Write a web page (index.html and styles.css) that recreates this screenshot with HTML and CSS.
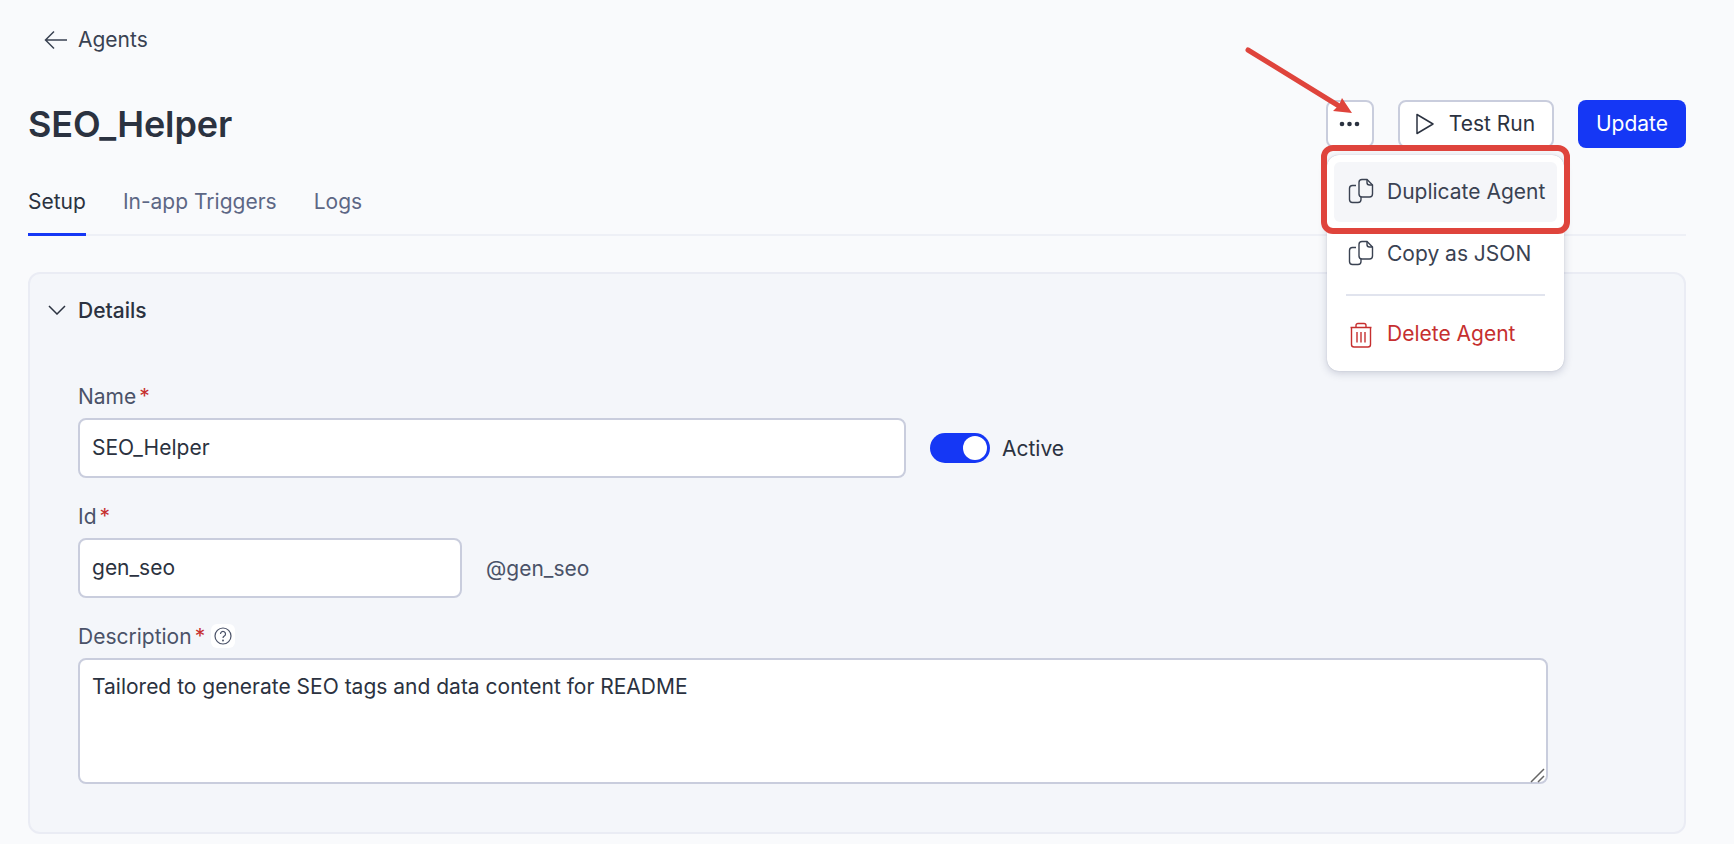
FILE: index.html
```html
<!DOCTYPE html>
<html lang="en">
<head>
<meta charset="utf-8">
<title>SEO_Helper</title>
<link rel="stylesheet" href="styles.css">
</head>
<body>
<div class="page">
  <a class="back">
    <svg class="back-icon" width="24" height="24" viewBox="0 0 24 24" fill="none" stroke="#3a4252" stroke-width="1.5"><path d="M23 12H2M10 3.500 1.500 12l8.500 8.500"/></svg>
    <span>Agents</span>
  </a>
  <header class="head">
    <h1 class="title">SEO_Helper</h1>
    <div class="actions">
      <button class="btn btn-icon" aria-label="More">
        <svg width="22" height="6" viewBox="0 0 22 6" fill="#2b3240"><circle cx="3" cy="3" r="2.300"/><circle cx="10.500" cy="3" r="2.300"/><circle cx="18" cy="3" r="2.300"/></svg>
      </button>
      <button class="btn btn-outline">
        <svg width="20" height="24" viewBox="0 0 20 24" fill="none" stroke="#2b3240" stroke-width="1.500" stroke-linejoin="round"><path d="M2 2.500v19L18 12z"/></svg>
        <span>Test Run</span>
      </button>
      <button class="btn btn-primary">Update</button>
      <div class="menu">
        <div class="menu-item is-hover">
          <svg class="menu-icon" width="26" height="26" viewBox="0 0 26 26" fill="none" stroke="#3a4252" stroke-width="1.400"><path d="M8 7.500H4.500a3 3 0 0 0-3 3v11a3 3 0 0 0 3 3H10a3 3 0 0 0 3-3v-2.500"/><path d="M14 1.500h5l5.500 5.500v9a3 3 0 0 1-3 3H14a3 3 0 0 1-3-3V4.500a3 3 0 0 1 3-3z"/><path d="M19 1.500v3a2.500 2.500 0 0 0 2.500 2.500h3"/></svg>
          <span>Duplicate Agent</span>
        </div>
        <div class="menu-item">
          <svg class="menu-icon" width="26" height="26" viewBox="0 0 26 26" fill="none" stroke="#3a4252" stroke-width="1.400"><path d="M8 7.500H4.500a3 3 0 0 0-3 3v11a3 3 0 0 0 3 3H10a3 3 0 0 0 3-3v-2.500"/><path d="M14 1.500h5l5.500 5.500v9a3 3 0 0 1-3 3H14a3 3 0 0 1-3-3V4.500a3 3 0 0 1 3-3z"/><path d="M19 1.500v3a2.500 2.500 0 0 0 2.500 2.500h3"/></svg>
          <span>Copy as JSON</span>
        </div>
        <hr class="menu-sep">
        <div class="menu-item is-danger">
          <svg class="menu-icon" width="26" height="26" viewBox="0 0 26 26" fill="none" stroke="#c62f2f" stroke-width="1.400"><path d="M2.500 5.500h21M8 5.500V3.500a2 2 0 0 1 2-2h6a2 2 0 0 1 2 2v2M3.500 5.500v17a2.500 2.500 0 0 0 2.500 2.500h14a2.500 2.500 0 0 0 2.500-2.500v-17M9 10v10.500M13 10v10.500M17 10v10.500"/></svg>
          <span>Delete Agent</span>
        </div>
      </div>
    </div>
  </header>
  <nav class="tabs">
    <a class="tab is-active">Setup</a>
    <a class="tab">In-app Triggers</a>
    <a class="tab">Logs</a>
  </nav>
  <section class="card">
    <div class="card-head">
      <svg width="18" height="10" viewBox="0 0 18 10" fill="none" stroke="#2b3240" stroke-width="1.500"><path d="M1 1l8 8 8-8"/></svg>
      <span>Details</span>
    </div>
    <div class="form">
      <div class="field">
        <label class="label">Name<span class="req">*</span></label>
        <div class="row">
          <input class="input input-name" value="SEO_Helper">
          <span class="switch"><span class="knob"></span></span>
          <span class="switch-text">Active</span>
        </div>
      </div>
      <div class="field">
        <label class="label">Id<span class="req">*</span></label>
        <div class="row">
          <input class="input input-id" value="gen_seo">
          <span class="hint">@gen_seo</span>
        </div>
      </div>
      <div class="field">
        <label class="label">Description<span class="req">*</span>
          <span class="help">
            <svg width="18" height="18" viewBox="0 0 18 18" fill="none" stroke="#4a5268" stroke-width="1.200"><circle cx="9" cy="9" r="8"/><path d="M6.500 7a2.500 2.500 0 1 1 3.800 2.100c-.8.500-1.300 1-1.300 2"/><circle cx="9" cy="13.500" r=".4"/></svg>
          </span>
        </label>
        <div class="textarea-wrap">
          <textarea class="input textarea">Tailored to generate SEO tags and data content for README</textarea>
          <svg class="grip" width="15" height="15" viewBox="0 0 15 15" fill="none" stroke="#666" stroke-width="1.500"><path d="M1 14 14 1M8 14l6-6"/></svg>
        </div>
      </div>
    </div>
  </section>
</div>
<div class="callout-box"></div>
<svg class="callout-arrow" width="120" height="80" viewBox="0 0 120 80" fill="none">
  <path d="M3 3 L94 59" stroke="#df443c" stroke-width="5" stroke-linecap="round"/>
  <path d="M107 66 L88 64 L94 58 L97 51 Z" fill="#df443c"/>
</svg>
</body>
</html>
```
FILE: styles.css
```css
* { box-sizing: border-box; }
html, body { margin: 0; height: 100%; }
body {
  background: #f9fafc;
  color: #2b3240;
  font-family: Inter, "Liberation Sans", sans-serif;
  font-size: 21px;
  overflow: hidden;
  position: relative;
}
.page { padding: 24px 48px 0 28px; }
.back {
  display: flex;
  align-items: center;
  gap: 10px;
  height: 31px;
  padding-left: 16px;
  color: #3a4252;
}
.head {
  display: flex;
  align-items: center;
  justify-content: space-between;
  margin-top: 45px;
  height: 48px;
}
.title { margin: 0; font-size: 36px; font-weight: 600; letter-spacing: -0.1px; color: #2b3240; }
.actions { position: relative; display: flex; gap: 24px; }
.btn {
  height: 48px;
  border-radius: 8px;
  font: inherit;
  display: flex;
  align-items: center;
  justify-content: center;
  padding: 0 0 1px;
}
.btn-icon { width: 48px; background: #fff; border: 2px solid #c9cddd; }
.btn-outline { width: 156px; gap: 14px; padding-right: 2px; background: #fff; border: 2px solid #c9cddd; color: #2b3240; }
.btn-primary { width: 108px; background: #1537f5; border: 0; color: #fff; }
.menu {
  position: absolute;
  z-index: 2;
  top: 55px;
  left: 1px;
  width: 237px;
  height: 216px;
  padding: 7px;
  background: #fff;
  border-radius: 12px;
  box-shadow: 0 2px 8px rgba(40, 50, 90, .22), 0 0 1px rgba(40, 50, 90, .3);
}
.menu-item {
  display: flex;
  align-items: center;
  gap: 13px;
  height: 60px;
  padding: 0 14px 2px;
  border-radius: 6px;
  color: #3a4252;
  white-space: nowrap;
}
.menu-icon { flex-shrink: 0; }
.menu-item + .menu-item { margin-top: 2px; }
.is-hover { background: #f5f6f9; }
.is-danger { color: #c62f2f; padding-bottom: 0; }
.is-danger .menu-icon { margin-top: 3px; }
.menu-sep { border: 0; height: 2px; background: #e1e4ee; margin: 10px 12px 7px; }
.tabs {
  display: flex;
  gap: 37px;
  margin-top: 18px;
  height: 70px;
  border-bottom: 2px solid #eef0f6;
}
.tab {
  display: flex;
  align-items: center;
  height: 70px;
  color: #5d6785;
}
.tab.is-active { color: #2b3240; padding-top: 3px; border-bottom: 3px solid #1537f5; }
.card {
  margin-top: 36px;
  height: 562px;
  padding: 0 48px;
  background: #f4f6fa;
  border: 2px solid #eaecf4;
  border-radius: 12px;
}
.card-head {
  display: flex;
  align-items: center;
  gap: 12px;
  height: 72px;
  margin-left: -30px;
  font-weight: 500;
}
.form { display: flex; flex-direction: column; gap: 24px; padding-top: 36px; }
.field { display: flex; flex-direction: column; gap: 8px; }
.label { display: flex; align-items: center; height: 28px; color: #4a5268; }
.req { color: #c62f2f; margin-left: 3px; }
.help {
  display: flex;
  align-items: center;
  justify-content: center;
  width: 24px;
  height: 24px;
  margin-left: 6px;
  background: #fff;
  border-radius: 6px;
}
.row { display: flex; align-items: center; }
.input {
  height: 60px;
  padding: 0 12px 2px;
  background: #fff;
  border: 2px solid #c9cddd;
  border-radius: 8px;
  color: #2b3240;
  font: inherit;
  outline: none;
}
.input-name { width: 828px; }
.input-id { width: 384px; }
.textarea-wrap { position: relative; width: 1470px; height: 126px; }
.textarea { display: block; width: 100%; height: 100%; padding: 15px 12px; line-height: 24px; resize: none; }
.grip { position: absolute; right: 3px; bottom: 1px; }
.switch {
  display: flex;
  justify-content: flex-end;
  align-items: center;
  width: 60px;
  height: 30px;
  margin-left: 24px;
  padding-right: 3px;
  background: #1537f5;
  border-radius: 15px;
}
.knob { width: 24px; height: 24px; background: #fff; border-radius: 50%; }
.switch-text { margin-left: 12px; color: #2b3240; }
.hint { margin-left: 24px; color: #4a5268; }
.callout-box {
  position: absolute;
  z-index: 3;
  left: 1321px;
  top: 145px;
  width: 249px;
  height: 89px;
  border: 6px solid #df443c;
  border-radius: 12px;
  pointer-events: none;
}
.callout-arrow { position: absolute; z-index: 4; left: 1245px; top: 47px; pointer-events: none; }
```
